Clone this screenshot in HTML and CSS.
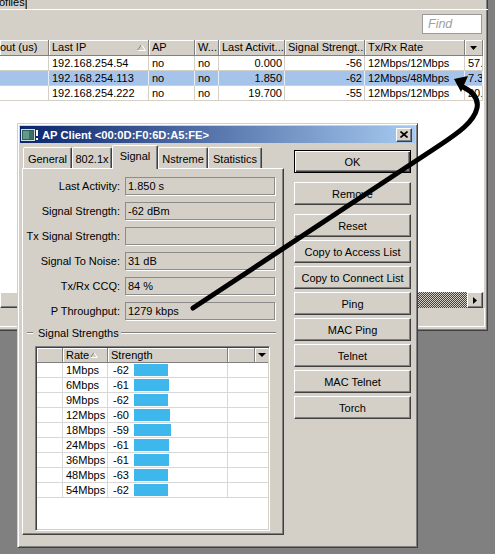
FILE: index.html
```html
<!DOCTYPE html>
<html>
<head>
<meta charset="utf-8">
<link rel="stylesheet" href="styles.css">
</head>
<body>
<div class="screen">
  <div class="mainwin">
    <div class="tabstrip"><div class="toptab"><span>ofiles</span></div></div>
    <div class="mainpanel">
      <div class="toolbar"><div class="find">Find</div></div>
      <div class="list">
        <div class="cols lhead">
          <div class="hc c1">out (us)</div>
          <div class="hc"><span class="ht">Last IP</span><svg class="sorttri" width="9" height="7" viewBox="0 0 9 7"><path d="M4.5,0.5 L0.5,6.5" stroke="#808080" fill="none"/><path d="M4.5,0.5 L8.5,6.5 L0.5,6.5" stroke="#ffffff" fill="none"/></svg></div>
          <div class="hc">AP</div>
          <div class="hc">W...</div>
          <div class="hc">Last Activit...</div>
          <div class="hc">Signal Strengt...</div>
          <div class="hc">Tx/Rx Rate</div>
          <div class="hc hdrop"><svg width="7" height="4" viewBox="0 0 7 4"><path d="M0,0 H7 L3.5,4 Z" fill="#000"/></svg></div>
        </div>
        <div class="cols lrow">
          <div></div><div>192.168.254.54</div><div>no</div><div>no</div><div class="r">0.000</div><div class="r">-56</div><div>12Mbps/12Mbps</div><div>57.</div>
        </div>
        <div class="cols lrow sel">
          <div></div><div>192.168.254.113</div><div>no</div><div>no</div><div class="r">1.850</div><div class="r">-62</div><div>12Mbps/48Mbps</div><div>7.3</div>
        </div>
        <div class="cols lrow">
          <div></div><div>192.168.254.222</div><div>no</div><div>no</div><div class="r">19.700</div><div class="r">-55</div><div>12Mbps/12Mbps</div><div>20.</div>
        </div>
      </div>
      <div class="hscroll">
        <div class="thumb"></div>
        <div class="track"></div>
        <div class="sbtn"><svg width="4" height="7" viewBox="0 0 4 7"><path d="M0,0 L4,3.5 L0,7 Z" fill="#000"/></svg></div>
      </div>
      <div class="status"></div>
    </div>
  </div>

  <div class="dialog">
    <div class="titlebar">
      <svg class="ticon" width="17" height="12" viewBox="0 0 17 12">
        <rect x="0.5" y="0.5" width="13" height="11" fill="#2f5f5a" stroke="#d8dde0"/>
        <rect x="2" y="2" width="6" height="8" fill="#5f9a8a"/>
        <rect x="8" y="2" width="4" height="8" fill="#3a6e66"/>
        <rect x="15" y="1" width="2" height="6" fill="#ffffff"/>
        <rect x="15" y="9" width="2" height="2" fill="#ffffff"/>
      </svg>
      <span class="ttext">AP Client &lt;00:0D:F0:6D:A5:FE&gt;</span>
      <div class="close"><svg width="8" height="7" viewBox="0 0 8 7"><path d="M0.5,0.5 L7.5,6.5 M7.5,0.5 L0.5,6.5" stroke="#000" stroke-width="1.7" fill="none"/></svg></div>
    </div>
    <div class="dbody">
      <div class="leftcol">
        <div class="tabs">
          <div class="tab w1">General</div>
          <div class="tab w2">802.1x</div>
          <div class="tab w3 sel">Signal</div>
          <div class="tab w4">Nstreme</div>
          <div class="tab w5">Statistics</div>
        </div>
        <div class="panel">
          <div class="fields">
            <div class="lbl">Last Activity:</div><div class="box">1.850 s</div>
            <div class="lbl">Signal Strength:</div><div class="box">-62 dBm</div>
            <div class="lbl">Tx Signal Strength:</div><div class="box"></div>
            <div class="lbl">Signal To Noise:</div><div class="box">31 dB</div>
            <div class="lbl">Tx/Rx CCQ:</div><div class="box">84 %</div>
            <div class="lbl">P Throughput:</div><div class="box">1279 kbps</div>
          </div>
          <div class="group"><span class="dash"></span><span class="gtitle">Signal Strengths</span><span class="gline"></span></div>
          <div class="stable">
            <div class="shead">
              <div class="shc"></div>
              <div class="shc"><span class="ht">Rate</span><svg class="sorttri2" width="8" height="6" viewBox="0 0 8 6"><path d="M4,0.5 L0.5,5.5" stroke="#808080" fill="none"/><path d="M4,0.5 L7.5,5.5 L0.5,5.5" stroke="#ffffff" fill="none"/></svg></div>
              <div class="shc">Strength</div>
              <div class="shc"></div>
              <div class="shc sdrop"><svg width="8" height="4" viewBox="0 0 8 4"><path d="M0,0 H8 L4,4 Z" fill="#000"/></svg></div>
            </div>
            <div class="srow"><div></div><div class="rate">1Mbps</div><div class="str"><span class="num">-62</span><span class="bar" style="width:34px"></span></div><div></div></div>
            <div class="srow"><div></div><div class="rate">6Mbps</div><div class="str"><span class="num">-61</span><span class="bar" style="width:35px"></span></div><div></div></div>
            <div class="srow"><div></div><div class="rate">9Mbps</div><div class="str"><span class="num">-62</span><span class="bar" style="width:34px"></span></div><div></div></div>
            <div class="srow"><div></div><div class="rate">12Mbps</div><div class="str"><span class="num">-60</span><span class="bar" style="width:36px"></span></div><div></div></div>
            <div class="srow"><div></div><div class="rate">18Mbps</div><div class="str"><span class="num">-59</span><span class="bar" style="width:37px"></span></div><div></div></div>
            <div class="srow"><div></div><div class="rate">24Mbps</div><div class="str"><span class="num">-61</span><span class="bar" style="width:35px"></span></div><div></div></div>
            <div class="srow"><div></div><div class="rate">36Mbps</div><div class="str"><span class="num">-61</span><span class="bar" style="width:35px"></span></div><div></div></div>
            <div class="srow"><div></div><div class="rate">48Mbps</div><div class="str"><span class="num">-63</span><span class="bar" style="width:34px"></span></div><div></div></div>
            <div class="srow"><div></div><div class="rate">54Mbps</div><div class="str"><span class="num">-62</span><span class="bar" style="width:34px"></span></div><div></div></div>
          </div>
        </div>
      </div>
      <div class="buttons">
        <div class="btn default">OK</div>
        <div class="btn wide">Remove</div>
        <div class="btn wide">Reset</div>
        <div class="btn">Copy to Access List</div>
        <div class="btn">Copy to Connect List</div>
        <div class="btn">Ping</div>
        <div class="btn">MAC Ping</div>
        <div class="btn">Telnet</div>
        <div class="btn">MAC Telnet</div>
        <div class="btn">Torch</div>
      </div>
    </div>
  </div>

  <svg class="annot" width="495" height="554" viewBox="0 0 495 554">
    <path d="M193,308 L440,145 C458,133 474,122 477,108 C479,98 471,91 463,87" stroke="#000" stroke-width="5" fill="none" stroke-linecap="round" stroke-linejoin="round"/>
    <polygon points="454,79 468,76 461,92" fill="#000"/>
  </svg>
</div>
</body>
</html>
```

FILE: styles.css
```css
* { box-sizing: border-box; }
html, body { margin: 0; padding: 0; }
body {
  width: 495px;
  height: 554px;
  overflow: hidden;
  background: #808080;
  font-family: "Liberation Sans", Arial, sans-serif;
  font-size: 11px;
  color: #000;
}
.screen { position: relative; width: 495px; height: 554px; }

/* main window */
.mainwin {
  width: 488px;
  height: 331px;
  background: #d4d0c8;
  display: flex;
  flex-direction: column;
  box-shadow: inset -1px -1px 0 #404040, inset -2px -2px 0 #808080;
}
.tabstrip { height: 9px; display: flex; }
.toptab {
  width: 27px;
  height: 9px;
  overflow: hidden;
  border-right: 1px solid #404040;
  box-shadow: inset -1px 0 0 #808080;
}
.toptab span { display: block; line-height: 11px; margin-top: -3px; margin-left: -1px; }
.mainpanel {
  flex: 1;
  display: flex;
  flex-direction: column;
  border-top: 1px solid #fff;
}
.toolbar {
  height: 30px;
  display: flex;
  justify-content: flex-end;
  padding: 4px 6px 0 0;
}
.find {
  width: 60px;
  height: 20px;
  background: #fff;
  border: 1px solid #9a9a9a;
  color: #a0a0a0;
  font-style: italic;
  font-size: 12.5px;
  line-height: 18px;
  padding-left: 5px;
}
.list {
  width: 484px;
  height: 252px;
  background: #fff;
  border-right: 1px solid #fff;
  overflow: hidden;
}
.cols {
  display: grid;
  grid-template-columns: 49px 100px 46px 24px 66px 80px 100px 18px;
}
.lhead { height: 16px; }
.hc {
  background: #d4d0c8;
  border-right: 1px solid #808080;
  border-bottom: 1px solid #808080;
  box-shadow: inset 1px 1px 0 #fff;
  line-height: 15px;
  padding: 0 3px;
  white-space: nowrap;
  overflow: hidden;
  display: flex;
  align-items: center;
}
.hc.c1 { padding-left: 0; }
.ht { flex: 1; overflow: hidden; }
.sorttri { margin-right: -1px; }
.hdrop { justify-content: center; padding: 0; }
.lrow { height: 15px; }
.lrow > div {
  border-right: 1px solid #d4d0c8;
  border-bottom: 1px solid #d4d0c8;
  line-height: 14px;
  padding: 0 3px;
  white-space: nowrap;
  overflow: hidden;
}
.lrow > .r { text-align: right; padding-right: 2px; }
.lrow.sel { background: #a6c4ea; }
.lrow.sel > div { border-right-color: #e6eef8; }
.hscroll { height: 16px; width: 483px; display: flex; }
.thumb {
  width: 40px;
  background: #d4d0c8;
  border: 1px solid;
  border-color: #fff #404040 #404040 #fff;
  box-shadow: inset -1px -1px 0 #808080;
}
.track {
  flex: 1;
  background: repeating-conic-gradient(#404040 0 25%, #d4d0c8 0 50%) 0 0 / 2px 2px;
}
.sbtn {
  width: 16px;
  background: #d4d0c8;
  border: 1px solid;
  border-color: #fff #404040 #404040 #fff;
  box-shadow: inset -1px -1px 0 #808080;
  display: flex;
  align-items: center;
  justify-content: center;
}
.status { height: 19px; width: 485px; box-shadow: inset -1px -1px 0 #fff; }

/* dialog */
.dialog {
  position: absolute;
  left: 17px;
  top: 123px;
  width: 401px;
  height: 425px;
  background: #d4d0c8;
  border: 1px solid;
  border-color: #d4d0c8 #404040 #404040 #d4d0c8;
  box-shadow: inset 1px 1px 0 #fff, inset -1px -1px 0 #808080;
  padding: 2px;
  display: flex;
  flex-direction: column;
}
.titlebar {
  height: 17px;
  display: flex;
  align-items: center;
  padding: 0 3px 0 1px;
  background: linear-gradient(to right, #0a246a, #a6caf0);
}
.ticon { margin-right: 4px; flex: none; }
.ttext {
  flex: 1;
  color: #fff;
  font-weight: bold;
  font-size: 11.2px;
  white-space: nowrap;
}
.close {
  width: 16px;
  height: 14px;
  background: #d4d0c8;
  border: 1px solid;
  border-color: #fff #404040 #404040 #fff;
  box-shadow: inset -1px -1px 0 #808080;
  display: flex;
  align-items: center;
  justify-content: center;
}
.dbody {
  flex: 1;
  display: flex;
  gap: 10px;
  padding: 2px 0 0 2px;
}
.leftcol { width: 262px; display: flex; flex-direction: column; }
.tabs {
  height: 23px;
  display: flex;
  align-items: flex-end;
  padding-left: 1px;
  position: relative;
  z-index: 1;
}
.tab {
  height: 21px;
  border: 1px solid;
  border-bottom: none;
  border-color: #fff #404040 transparent #fff;
  box-shadow: inset -1px 0 0 #808080;
  border-radius: 2px 2px 0 0;
  background: #d4d0c8;
  text-align: center;
  line-height: 14px;
  padding-top: 4px;
  white-space: nowrap;
}
.tab.sel { height: 24px; margin-bottom: -1px; padding-top: 3px; }
.w1 { width: 49px; }
.w2 { width: 40px; }
.w3 { width: 46px; }
.w4 { width: 50px; }
.w5 { width: 54px; }
.panel {
  height: 367px;
  border: 1px solid;
  border-color: #fff #404040 #404040 #fff;
  box-shadow: inset -1px -1px 0 #808080;
  padding-top: 8px;
}
.fields {
  display: grid;
  grid-template-columns: 97px 150px;
  grid-auto-rows: 18px;
  column-gap: 5px;
  row-gap: 7px;
}
.lbl { text-align: right; line-height: 18px; white-space: nowrap; }
.box {
  border: 1px solid #8c8c8c;
  box-shadow: 1px 1px 0 #fff;
  padding-left: 2px;
  line-height: 16px;
  white-space: nowrap;
}
.group {
  display: flex;
  align-items: center;
  height: 14px;
  margin-top: 6px;
}
.dash {
  width: 6px;
  height: 2px;
  margin-left: 4px;
  border-top: 1px solid #808080;
  border-bottom: 1px solid #fff;
}
.gtitle { margin-left: 5px; white-space: nowrap; line-height: 14px; }
.gline {
  flex: 1;
  height: 2px;
  margin: 0 7px 0 2px;
  border-top: 1px solid #808080;
  border-bottom: 1px solid #fff;
}
.stable {
  margin: 6px 0 0 12px;
  width: 235px;
  height: 185px;
  background: #fff;
  border: 1px solid;
  border-color: #808080 #fff #fff #808080;
  box-shadow: inset 1px 1px 0 #404040, inset -1px -1px 0 #d4d0c8;
  padding: 1px;
  overflow: hidden;
}
.shead {
  display: grid;
  grid-template-columns: 26px 45px 120px 27px 13px;
  height: 15px;
}
.shc {
  background: #d4d0c8;
  border-right: 1px solid #808080;
  border-bottom: 1px solid #808080;
  box-shadow: inset 1px 1px 0 #fff;
  line-height: 14px;
  padding-left: 3px;
  display: flex;
  align-items: center;
  white-space: nowrap;
}
.sorttri2 { margin-right: 9px; }
.sdrop { justify-content: center; padding-left: 0; border-right: none; }
.srow {
  display: grid;
  grid-template-columns: 26px 45px 120px 40px;
  height: 15px;
}
.srow > div {
  border-right: 1px solid #d8d8d8;
  border-bottom: 1px solid #d8d8d8;
  line-height: 14px;
  white-space: nowrap;
}
.srow > div:last-child { border-right: none; }
.rate { padding-left: 3px; }
.str { display: flex; align-items: center; padding-left: 5px; }
.num { width: 21px; flex: none; }
.bar { height: 12px; background: #3eb8ec; flex: none; }

.buttons {
  width: 117px;
  display: flex;
  flex-direction: column;
  padding-top: 5px;
}
.btn {
  height: 23px;
  margin-top: 3px;
  background: #d4d0c8;
  border: 1px solid;
  border-color: #fff #404040 #404040 #fff;
  box-shadow: inset -1px -1px 0 #808080;
  display: flex;
  align-items: center;
  justify-content: center;
  white-space: nowrap;
}
.btn.default {
  margin-top: 0;
  border-color: #000;
  box-shadow: inset 1px 1px 0 #fff, inset -1px -1px 0 #404040, inset -2px -2px 0 #808080;
}
.btn.wide { margin-top: 9px; }

.annot { position: absolute; left: 0; top: 0; pointer-events: none; }
```
